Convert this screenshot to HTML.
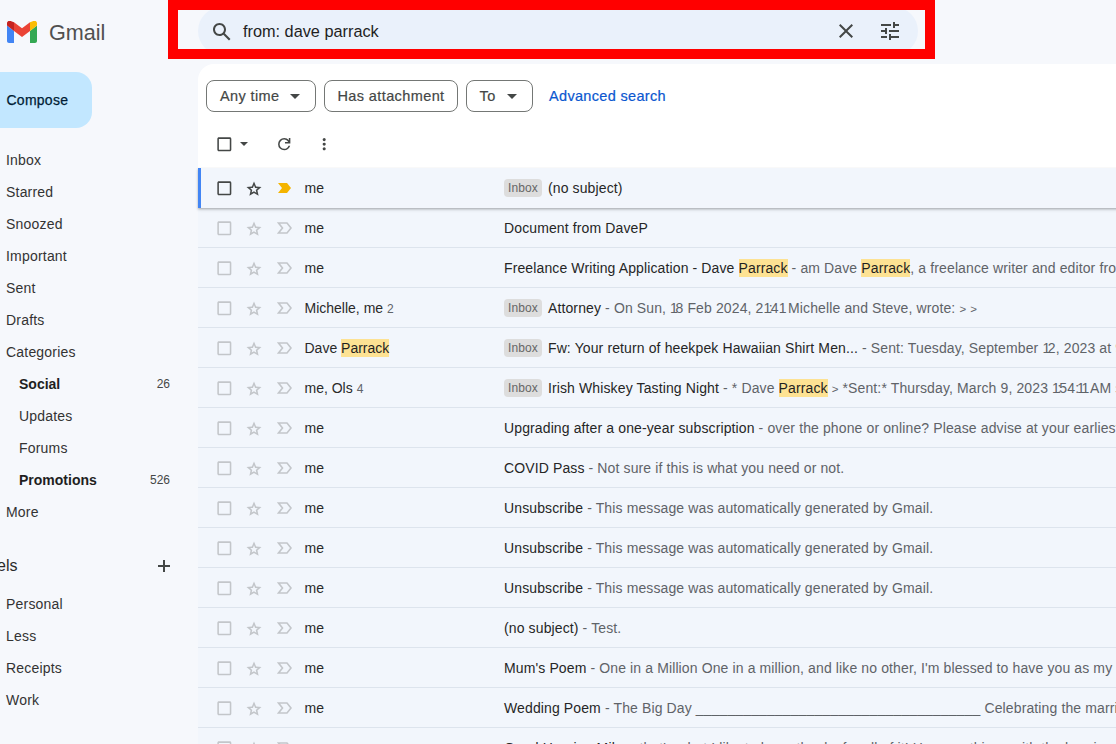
<!DOCTYPE html><html><head><meta charset="utf-8"><style>
html,body{margin:0;padding:0;width:1116px;height:744px;overflow:hidden;background:#f6f8fc;position:relative;font-family:"Liberation Sans",sans-serif}
.t{position:absolute;white-space:pre}
.row{position:absolute;left:198px;width:940px;height:40px;background:#f2f6fc;box-sizing:border-box;border-bottom:1px solid #dde4ed}
.hl{background:#fde293;display:inline-block;line-height:18px;color:#1f1f1f}
.sel{border-bottom:none;box-shadow:0 1px 2px 0 rgba(60,64,67,.3),0 2px 3px 0 rgba(60,64,67,.15)}
i{font-style:normal}
.o{letter-spacing:-2.4px}
.c{letter-spacing:-2px}
.gt{font-size:11.5px}
.cnt{font-size:12px;color:#5f6368}
.badge{display:inline-block;background:#dddddd;color:#666666;font-size:12px;line-height:18px;height:18px;padding:0 4px;border-radius:4px;margin-right:6px;vertical-align:1px}
</style></head><body>
<svg style="position:absolute;left:7px;top:21px" width="30" height="22" viewBox="0 0 30 22">
<path d="M2 22h5V9.9L0 4.6V20c0 1.1.9 2 2 2z" fill="#4285f4"/>
<path d="M23 22h5c1.1 0 2-.9 2-2V4.6L23 9.9z" fill="#34a853"/>
<path d="M23 1.3v8.6l7-5.3V2.3C30 .1 27.5-1.1 25.8.2z" fill="#fbbc04"/>
<path d="M7 9.9V1.3l8 6 8-6v8.6l-8 6z" fill="#ea4335"/>
<path d="M0 2.3v2.3l7 5.3V1.3L4.2.2C2.5-1.1 0 .1 0 2.3z" fill="#c5221f"/>
</svg>
<div class="t" style="left:49px;top:17.52px;font-size:21.6px;line-height:30px;font-weight:400;color:#505050;">Gmail</div>
<div style="position:absolute;left:-20px;top:72px;width:112px;height:56px;border-radius:16px;background:#c2e7ff"></div>
<div class="t" style="left:6.5px;top:90.15px;font-size:14px;line-height:20px;font-weight:400;color:#001d35;-webkit-text-stroke:0.25px #001d35;letter-spacing:0.25px;">Compose</div>
<div class="t" style="left:6px;top:150.15px;font-size:14px;line-height:20px;font-weight:400;color:#333333;letter-spacing:0.2px;">Inbox</div>
<div class="t" style="left:6px;top:182.15px;font-size:14px;line-height:20px;font-weight:400;color:#333333;letter-spacing:0.2px;">Starred</div>
<div class="t" style="left:6px;top:214.15px;font-size:14px;line-height:20px;font-weight:400;color:#333333;letter-spacing:0.2px;">Snoozed</div>
<div class="t" style="left:6px;top:246.15px;font-size:14px;line-height:20px;font-weight:400;color:#333333;letter-spacing:0.2px;">Important</div>
<div class="t" style="left:6px;top:278.15px;font-size:14px;line-height:20px;font-weight:400;color:#333333;letter-spacing:0.2px;">Sent</div>
<div class="t" style="left:6px;top:310.15px;font-size:14px;line-height:20px;font-weight:400;color:#333333;letter-spacing:0.2px;">Drafts</div>
<div class="t" style="left:6px;top:342.15px;font-size:14px;line-height:20px;font-weight:400;color:#333333;letter-spacing:0.2px;">Categories</div>
<div class="t" style="left:6px;top:502.15px;font-size:14px;line-height:20px;font-weight:400;color:#333333;letter-spacing:0.2px;">More</div>
<div class="t" style="left:6px;top:594.15px;font-size:14px;line-height:20px;font-weight:400;color:#333333;letter-spacing:0.2px;">Personal</div>
<div class="t" style="left:6px;top:626.15px;font-size:14px;line-height:20px;font-weight:400;color:#333333;letter-spacing:0.2px;">Less</div>
<div class="t" style="left:6px;top:658.15px;font-size:14px;line-height:20px;font-weight:400;color:#333333;letter-spacing:0.2px;">Receipts</div>
<div class="t" style="left:6px;top:690.15px;font-size:14px;line-height:20px;font-weight:400;color:#333333;letter-spacing:0.2px;">Work</div>
<div class="t" style="left:19px;top:374.15px;font-size:14px;line-height:20px;font-weight:700;color:#1f1f1f;">Social</div>
<div class="t" style="left:19px;top:406.15px;font-size:14px;line-height:20px;font-weight:400;color:#333333;letter-spacing:0.2px;">Updates</div>
<div class="t" style="left:19px;top:438.15px;font-size:14px;line-height:20px;font-weight:400;color:#333333;letter-spacing:0.2px;">Forums</div>
<div class="t" style="left:19px;top:470.15px;font-size:14px;line-height:20px;font-weight:700;color:#1f1f1f;">Promotions</div>
<div class="t" style="right:946px;top:376.34px;font-size:12px;line-height:17px;font-weight:400;color:#444746;">26</div>
<div class="t" style="right:946px;top:472.34px;font-size:12px;line-height:17px;font-weight:400;color:#444746;">526</div>
<div class="t" style="right:1098.5px;top:555.16px;font-size:16px;line-height:22px;font-weight:400;color:#2a2a2a;">Labels</div>
<div style="position:absolute;left:158px;top:565.25px;width:12px;height:1.5px;background:#444746"></div>
<div style="position:absolute;left:163.25px;top:560px;width:1.5px;height:12px;background:#444746"></div>
<div style="position:absolute;left:198px;top:7px;width:720px;height:48px;border-radius:24px;background:#eaf1fb"></div>
<svg style="position:absolute;left:210px;top:20px" width="24" height="24" viewBox="0 0 24 24"><path fill="#444746" d="M20.49 19l-5.73-5.73C15.53 12.2 16 10.91 16 9.5 16 5.91 13.09 3 9.5 3S3 5.910 3 9.5 5.91 16 9.5 16c1.41 0 2.7-.47 3.77-1.24L19 20.49 20.49 19zM5 9.5C5 7.01 7.01 5 9.5 5S14 7.01 14 9.5 11.99 14 9.5 14 5 11.99 5 9.5z"/></svg>
<div class="t" style="left:243px;top:20.05px;font-size:16.3px;line-height:23px;font-weight:400;color:#1f1f1f;">from: dave parrack</div>
<svg style="position:absolute;left:834px;top:19px" width="24" height="24" viewBox="0 0 24 24"><path fill="#444746" d="M19 6.41L17.59 5 12 10.59 6.41 5 5 6.41 10.59 12 5 17.59 6.41 19 12 13.41 17.59 19 19 17.59 13.41 12z"/></svg>
<svg style="position:absolute;left:878px;top:19px" width="24" height="24" viewBox="0 0 24 24"><path fill="#444746" d="M3 17v2h6v-2H3zM3 5v2h10V5H3zm10 16v-2h8v-2h-8v-2h-2v6h2zM7 9v2H3v2h4v2h2V9H7zm14 4v-2H11v2h10zm-6-4h2V7h4V5h-4V3h-2v6z"/></svg>
<div style="position:absolute;left:168px;top:0px;width:767px;height:59px;box-sizing:border-box;border:10px solid #ff0000"></div>
<div style="position:absolute;left:198px;top:64px;width:940px;height:700px;border-top-left-radius:16px;background:#fff"></div>
<div style="position:absolute;left:206px;top:80px;width:110px;height:32px;box-sizing:border-box;border:1px solid #747775;border-radius:8px"></div>
<div class="t" style="left:220px;top:85.58px;font-size:14.5px;line-height:20px;font-weight:400;color:#444746;letter-spacing:0.39px;-webkit-text-stroke:0.2px #444746;">Any time</div>
<svg style="position:absolute;left:290px;top:94px" width="10" height="5" viewBox="0 0 10 5"><path d="M0 0h10L5 5z" fill="#444746"/></svg>
<div style="position:absolute;left:324px;top:80px;width:134px;height:32px;box-sizing:border-box;border:1px solid #747775;border-radius:8px"></div>
<div class="t" style="left:337.5px;top:85.58px;font-size:14.5px;line-height:20px;font-weight:400;color:#444746;letter-spacing:0.39px;-webkit-text-stroke:0.2px #444746;">Has attachment</div>
<div style="position:absolute;left:466px;top:80px;width:67px;height:32px;box-sizing:border-box;border:1px solid #747775;border-radius:8px"></div>
<div class="t" style="left:479.5px;top:85.58px;font-size:14.5px;line-height:20px;font-weight:400;color:#444746;letter-spacing:0.39px;-webkit-text-stroke:0.2px #444746;">To</div>
<svg style="position:absolute;left:507px;top:94px" width="10" height="5" viewBox="0 0 10 5"><path d="M0 0h10L5 5z" fill="#444746"/></svg>
<div class="t" style="left:549px;top:85.58px;font-size:14.5px;line-height:20px;font-weight:400;color:#0b57d0;letter-spacing:0.33px;-webkit-text-stroke:0.2px #0b57d0;">Advanced search</div>
<svg style="position:absolute;left:214.67px;top:134.67px" width="18.67" height="18.67" viewBox="0 0 24 24"><path fill="#444746" d="M19 5v14H5V5h14m0-2H5c-1.1 0-2 .9-2 2v14c0 1.1.9 2 2 2h14c1.1 0 2-.9 2-2V5c0-1.1-.9-2-2-2z"/></svg>
<svg style="position:absolute;left:240px;top:142px" width="8" height="4" viewBox="0 0 8 4"><path d="M0 0h8L4 4z" fill="#444746"/></svg>
<svg style="position:absolute;left:275px;top:135px" width="18.45" height="18.45" viewBox="0 -960 960 960"><path fill="#444746" d="M480-160q-134 0-227-93t-93-227q0-134 93-227t227-93q69 0 132 28.5T720-690v-110h80v280H520v-80h168q-32-56-87.5-88T480-720q-100 0-170 70t-70 170q0 100 70 170t170 70q77 0 139-44t87-116h84q-28 106-114 173t-196 67Z"/></svg>
<svg style="position:absolute;left:314.5px;top:134.7px" width="18.4" height="18.4" viewBox="0 -960 960 960"><path fill="#444746" d="M480-160q-33 0-56.5-23.5T400-240q0-33 23.5-56.5T480-320q33 0 56.5 23.5T560-240q0 33-23.5 56.5T480-160Zm0-240q-33 0-56.5-23.5T400-480q0-33 23.5-56.5T480-560q33 0 56.5 23.5T560-480q0 33-23.5 56.5T480-400Zm0-240q-33 0-56.5-23.5T400-720q0-33 23.5-56.5T480-800q33 0 56.5 23.5T560-720q0 33-23.5 56.5T480-640Z"/></svg>
<div class="row" style="top:208px"></div>
<div class="row" style="top:248px"></div>
<div class="row" style="top:288px"></div>
<div class="row" style="top:328px"></div>
<div class="row" style="top:368px"></div>
<div class="row" style="top:408px"></div>
<div class="row" style="top:448px"></div>
<div class="row" style="top:488px"></div>
<div class="row" style="top:528px"></div>
<div class="row" style="top:568px"></div>
<div class="row" style="top:608px"></div>
<div class="row" style="top:648px"></div>
<div class="row" style="top:688px"></div>
<div class="row" style="top:728px"></div>
<div class="row sel" style="top:168px"></div>
<div style="position:absolute;left:198px;top:168px;width:3px;height:40px;background:#4285f4"></div>
<svg style="position:absolute;left:214.67px;top:178.67px" width="18.67" height="18.67" viewBox="0 0 24 24"><path fill="#444746" d="M19 5v14H5V5h14m0-2H5c-1.1 0-2 .9-2 2v14c0 1.1.9 2 2 2h14c1.1 0 2-.9 2-2V5c0-1.1-.9-2-2-2z"/></svg>
<svg style="position:absolute;left:245px;top:180px" width="18" height="18" viewBox="0 -960 960 960"><path fill="#444746" d="m354-287 126-76 126 77-33-144 111-96-146-13-58-136-58 135-146 13 111 97-33 143ZM233-120l65-281L80-590l288-25 112-265 112 265 288 25-218 189 65 281-247-149-247 149Z"/></svg>
<svg style="position:absolute;left:278px;top:183px" width="13" height="10" viewBox="0 0 13 10"><path d="M0 0h9l4 5-4 5H0l4-5z" fill="#f4b400"/></svg>
<div class="t" style="left:304.5px;top:177.85px;font-size:14px;line-height:20px;font-weight:400;color:#2a2a2a;">me</div>
<div class="t" style="left:504px;top:177.85px;font-size:14px;line-height:20px;font-weight:400;color:#262626;letter-spacing:0.12px;"><span class="badge">Inbox</span><span style="color:#262626">(no subject)</span></div>
<svg style="position:absolute;left:214.67px;top:218.67px" width="18.67" height="18.67" viewBox="0 0 24 24"><path fill="#c3c6ca" d="M19 5v14H5V5h14m0-2H5c-1.1 0-2 .9-2 2v14c0 1.1.9 2 2 2h14c1.1 0 2-.9 2-2V5c0-1.1-.9-2-2-2z"/></svg>
<svg style="position:absolute;left:245px;top:220px" width="18" height="18" viewBox="0 -960 960 960"><path fill="#c3c6ca" d="m354-287 126-76 126 77-33-144 111-96-146-13-58-136-58 135-146 13 111 97-33 143ZM233-120l65-281L80-590l288-25 112-265 112 265 288 25-218 189 65 281-247-149-247 149Z"/></svg>
<svg style="position:absolute;left:277px;top:222px" width="15" height="12" viewBox="0 0 15 12"><path d="M1.5 1h8.5l4 5-4 5H1.5l4-5z" fill="none" stroke="#c3c6ca" stroke-width="1.6" stroke-linejoin="miter"/></svg>
<div class="t" style="left:304.5px;top:217.85px;font-size:14px;line-height:20px;font-weight:400;color:#2a2a2a;">me</div>
<div class="t" style="left:504px;top:217.85px;font-size:14px;line-height:20px;font-weight:400;color:#262626;letter-spacing:0.12px;"><span style="color:#262626">Document from DaveP</span></div>
<svg style="position:absolute;left:214.67px;top:258.67px" width="18.67" height="18.67" viewBox="0 0 24 24"><path fill="#c3c6ca" d="M19 5v14H5V5h14m0-2H5c-1.1 0-2 .9-2 2v14c0 1.1.9 2 2 2h14c1.1 0 2-.9 2-2V5c0-1.1-.9-2-2-2z"/></svg>
<svg style="position:absolute;left:245px;top:260px" width="18" height="18" viewBox="0 -960 960 960"><path fill="#c3c6ca" d="m354-287 126-76 126 77-33-144 111-96-146-13-58-136-58 135-146 13 111 97-33 143ZM233-120l65-281L80-590l288-25 112-265 112 265 288 25-218 189 65 281-247-149-247 149Z"/></svg>
<svg style="position:absolute;left:277px;top:262px" width="15" height="12" viewBox="0 0 15 12"><path d="M1.5 1h8.5l4 5-4 5H1.5l4-5z" fill="none" stroke="#c3c6ca" stroke-width="1.6" stroke-linejoin="miter"/></svg>
<div class="t" style="left:304.5px;top:257.85px;font-size:14px;line-height:20px;font-weight:400;color:#2a2a2a;">me</div>
<div class="t" style="left:504px;top:257.85px;font-size:14px;line-height:20px;font-weight:400;color:#262626;letter-spacing:0.12px;"><span style="color:#262626">Freelance Writing Application - Dave <span class="hl">Parrack</span></span><span style="color:#5f6368"> - am Dave <span class="hl">Parrack</span>, a freelance writer and editor from the UK</span></div>
<svg style="position:absolute;left:214.67px;top:298.67px" width="18.67" height="18.67" viewBox="0 0 24 24"><path fill="#c3c6ca" d="M19 5v14H5V5h14m0-2H5c-1.1 0-2 .9-2 2v14c0 1.1.9 2 2 2h14c1.1 0 2-.9 2-2V5c0-1.1-.9-2-2-2z"/></svg>
<svg style="position:absolute;left:245px;top:300px" width="18" height="18" viewBox="0 -960 960 960"><path fill="#c3c6ca" d="m354-287 126-76 126 77-33-144 111-96-146-13-58-136-58 135-146 13 111 97-33 143ZM233-120l65-281L80-590l288-25 112-265 112 265 288 25-218 189 65 281-247-149-247 149Z"/></svg>
<svg style="position:absolute;left:277px;top:302px" width="15" height="12" viewBox="0 0 15 12"><path d="M1.5 1h8.5l4 5-4 5H1.5l4-5z" fill="none" stroke="#c3c6ca" stroke-width="1.6" stroke-linejoin="miter"/></svg>
<div class="t" style="left:304.5px;top:297.85px;font-size:14px;line-height:20px;font-weight:400;color:#2a2a2a;">Michelle, me <span class="cnt">2</span></div>
<div class="t" style="left:504px;top:297.85px;font-size:14px;line-height:20px;font-weight:400;color:#262626;letter-spacing:0.12px;"><span class="badge">Inbox</span><span style="color:#262626">Attorney</span><span style="color:#5f6368"> - On Sun, <i class=o>1</i>8 Feb 2024, 2<i class=o>1</i><i class=c>:</i>4<i class=o>1</i> Michelle and Steve, wrote: <span class=gt>&gt;</span> <span class=gt>&gt;</span></span></div>
<svg style="position:absolute;left:214.67px;top:338.67px" width="18.67" height="18.67" viewBox="0 0 24 24"><path fill="#c3c6ca" d="M19 5v14H5V5h14m0-2H5c-1.1 0-2 .9-2 2v14c0 1.1.9 2 2 2h14c1.1 0 2-.9 2-2V5c0-1.1-.9-2-2-2z"/></svg>
<svg style="position:absolute;left:245px;top:340px" width="18" height="18" viewBox="0 -960 960 960"><path fill="#c3c6ca" d="m354-287 126-76 126 77-33-144 111-96-146-13-58-136-58 135-146 13 111 97-33 143ZM233-120l65-281L80-590l288-25 112-265 112 265 288 25-218 189 65 281-247-149-247 149Z"/></svg>
<svg style="position:absolute;left:277px;top:342px" width="15" height="12" viewBox="0 0 15 12"><path d="M1.5 1h8.5l4 5-4 5H1.5l4-5z" fill="none" stroke="#c3c6ca" stroke-width="1.6" stroke-linejoin="miter"/></svg>
<div class="t" style="left:304.5px;top:337.85px;font-size:14px;line-height:20px;font-weight:400;color:#2a2a2a;">Dave <span class="hl">Parrack</span></div>
<div class="t" style="left:504px;top:337.85px;font-size:14px;line-height:20px;font-weight:400;color:#262626;letter-spacing:0.12px;"><span class="badge">Inbox</span><span style="color:#262626">Fw: Your return of heekpek Hawaiian Shirt Men...</span><span style="color:#5f6368"> - Sent: Tuesday, September <i class=o>1</i>2, 2023 at 9<i class=c>:</i>30 AM</span></div>
<svg style="position:absolute;left:214.67px;top:378.67px" width="18.67" height="18.67" viewBox="0 0 24 24"><path fill="#c3c6ca" d="M19 5v14H5V5h14m0-2H5c-1.1 0-2 .9-2 2v14c0 1.1.9 2 2 2h14c1.1 0 2-.9 2-2V5c0-1.1-.9-2-2-2z"/></svg>
<svg style="position:absolute;left:245px;top:380px" width="18" height="18" viewBox="0 -960 960 960"><path fill="#c3c6ca" d="m354-287 126-76 126 77-33-144 111-96-146-13-58-136-58 135-146 13 111 97-33 143ZM233-120l65-281L80-590l288-25 112-265 112 265 288 25-218 189 65 281-247-149-247 149Z"/></svg>
<svg style="position:absolute;left:277px;top:382px" width="15" height="12" viewBox="0 0 15 12"><path d="M1.5 1h8.5l4 5-4 5H1.5l4-5z" fill="none" stroke="#c3c6ca" stroke-width="1.6" stroke-linejoin="miter"/></svg>
<div class="t" style="left:304.5px;top:377.85px;font-size:14px;line-height:20px;font-weight:400;color:#2a2a2a;">me, Ols <span class="cnt">4</span></div>
<div class="t" style="left:504px;top:377.85px;font-size:14px;line-height:20px;font-weight:400;color:#262626;letter-spacing:0.12px;"><span class="badge">Inbox</span><span style="color:#262626">Irish Whiskey Tasting Night</span><span style="color:#5f6368"> - * Dave <span class="hl">Parrack</span> <span class=gt>&gt;</span> *Sent:* Thursday, March 9, 2023 <i class=o>1</i><i class=c>:</i>54<i class=c>:</i><i class=o>1</i><i class=o>1</i> AM <span class=gt>&gt;</span></span></div>
<svg style="position:absolute;left:214.67px;top:418.67px" width="18.67" height="18.67" viewBox="0 0 24 24"><path fill="#c3c6ca" d="M19 5v14H5V5h14m0-2H5c-1.1 0-2 .9-2 2v14c0 1.1.9 2 2 2h14c1.1 0 2-.9 2-2V5c0-1.1-.9-2-2-2z"/></svg>
<svg style="position:absolute;left:245px;top:420px" width="18" height="18" viewBox="0 -960 960 960"><path fill="#c3c6ca" d="m354-287 126-76 126 77-33-144 111-96-146-13-58-136-58 135-146 13 111 97-33 143ZM233-120l65-281L80-590l288-25 112-265 112 265 288 25-218 189 65 281-247-149-247 149Z"/></svg>
<svg style="position:absolute;left:277px;top:422px" width="15" height="12" viewBox="0 0 15 12"><path d="M1.5 1h8.5l4 5-4 5H1.5l4-5z" fill="none" stroke="#c3c6ca" stroke-width="1.6" stroke-linejoin="miter"/></svg>
<div class="t" style="left:304.5px;top:417.85px;font-size:14px;line-height:20px;font-weight:400;color:#2a2a2a;">me</div>
<div class="t" style="left:504px;top:417.85px;font-size:14px;line-height:20px;font-weight:400;color:#262626;letter-spacing:0.12px;"><span style="color:#262626">Upgrading after a one-year subscription</span><span style="color:#5f6368"> - over the phone or online? Please advise at your earliest convenience</span></div>
<svg style="position:absolute;left:214.67px;top:458.67px" width="18.67" height="18.67" viewBox="0 0 24 24"><path fill="#c3c6ca" d="M19 5v14H5V5h14m0-2H5c-1.1 0-2 .9-2 2v14c0 1.1.9 2 2 2h14c1.1 0 2-.9 2-2V5c0-1.1-.9-2-2-2z"/></svg>
<svg style="position:absolute;left:245px;top:460px" width="18" height="18" viewBox="0 -960 960 960"><path fill="#c3c6ca" d="m354-287 126-76 126 77-33-144 111-96-146-13-58-136-58 135-146 13 111 97-33 143ZM233-120l65-281L80-590l288-25 112-265 112 265 288 25-218 189 65 281-247-149-247 149Z"/></svg>
<svg style="position:absolute;left:277px;top:462px" width="15" height="12" viewBox="0 0 15 12"><path d="M1.5 1h8.5l4 5-4 5H1.5l4-5z" fill="none" stroke="#c3c6ca" stroke-width="1.6" stroke-linejoin="miter"/></svg>
<div class="t" style="left:304.5px;top:457.85px;font-size:14px;line-height:20px;font-weight:400;color:#2a2a2a;">me</div>
<div class="t" style="left:504px;top:457.85px;font-size:14px;line-height:20px;font-weight:400;color:#262626;letter-spacing:0.12px;"><span style="color:#262626">COVID Pass</span><span style="color:#5f6368"> - Not sure if this is what you need or not.</span></div>
<svg style="position:absolute;left:214.67px;top:498.67px" width="18.67" height="18.67" viewBox="0 0 24 24"><path fill="#c3c6ca" d="M19 5v14H5V5h14m0-2H5c-1.1 0-2 .9-2 2v14c0 1.1.9 2 2 2h14c1.1 0 2-.9 2-2V5c0-1.1-.9-2-2-2z"/></svg>
<svg style="position:absolute;left:245px;top:500px" width="18" height="18" viewBox="0 -960 960 960"><path fill="#c3c6ca" d="m354-287 126-76 126 77-33-144 111-96-146-13-58-136-58 135-146 13 111 97-33 143ZM233-120l65-281L80-590l288-25 112-265 112 265 288 25-218 189 65 281-247-149-247 149Z"/></svg>
<svg style="position:absolute;left:277px;top:502px" width="15" height="12" viewBox="0 0 15 12"><path d="M1.5 1h8.5l4 5-4 5H1.5l4-5z" fill="none" stroke="#c3c6ca" stroke-width="1.6" stroke-linejoin="miter"/></svg>
<div class="t" style="left:304.5px;top:497.85px;font-size:14px;line-height:20px;font-weight:400;color:#2a2a2a;">me</div>
<div class="t" style="left:504px;top:497.85px;font-size:14px;line-height:20px;font-weight:400;color:#262626;letter-spacing:0.12px;"><span style="color:#262626">Unsubscribe</span><span style="color:#5f6368"> - This message was automatically generated by Gmail.</span></div>
<svg style="position:absolute;left:214.67px;top:538.67px" width="18.67" height="18.67" viewBox="0 0 24 24"><path fill="#c3c6ca" d="M19 5v14H5V5h14m0-2H5c-1.1 0-2 .9-2 2v14c0 1.1.9 2 2 2h14c1.1 0 2-.9 2-2V5c0-1.1-.9-2-2-2z"/></svg>
<svg style="position:absolute;left:245px;top:540px" width="18" height="18" viewBox="0 -960 960 960"><path fill="#c3c6ca" d="m354-287 126-76 126 77-33-144 111-96-146-13-58-136-58 135-146 13 111 97-33 143ZM233-120l65-281L80-590l288-25 112-265 112 265 288 25-218 189 65 281-247-149-247 149Z"/></svg>
<svg style="position:absolute;left:277px;top:542px" width="15" height="12" viewBox="0 0 15 12"><path d="M1.5 1h8.5l4 5-4 5H1.5l4-5z" fill="none" stroke="#c3c6ca" stroke-width="1.6" stroke-linejoin="miter"/></svg>
<div class="t" style="left:304.5px;top:537.85px;font-size:14px;line-height:20px;font-weight:400;color:#2a2a2a;">me</div>
<div class="t" style="left:504px;top:537.85px;font-size:14px;line-height:20px;font-weight:400;color:#262626;letter-spacing:0.12px;"><span style="color:#262626">Unsubscribe</span><span style="color:#5f6368"> - This message was automatically generated by Gmail.</span></div>
<svg style="position:absolute;left:214.67px;top:578.67px" width="18.67" height="18.67" viewBox="0 0 24 24"><path fill="#c3c6ca" d="M19 5v14H5V5h14m0-2H5c-1.1 0-2 .9-2 2v14c0 1.1.9 2 2 2h14c1.1 0 2-.9 2-2V5c0-1.1-.9-2-2-2z"/></svg>
<svg style="position:absolute;left:245px;top:580px" width="18" height="18" viewBox="0 -960 960 960"><path fill="#c3c6ca" d="m354-287 126-76 126 77-33-144 111-96-146-13-58-136-58 135-146 13 111 97-33 143ZM233-120l65-281L80-590l288-25 112-265 112 265 288 25-218 189 65 281-247-149-247 149Z"/></svg>
<svg style="position:absolute;left:277px;top:582px" width="15" height="12" viewBox="0 0 15 12"><path d="M1.5 1h8.5l4 5-4 5H1.5l4-5z" fill="none" stroke="#c3c6ca" stroke-width="1.6" stroke-linejoin="miter"/></svg>
<div class="t" style="left:304.5px;top:577.85px;font-size:14px;line-height:20px;font-weight:400;color:#2a2a2a;">me</div>
<div class="t" style="left:504px;top:577.85px;font-size:14px;line-height:20px;font-weight:400;color:#262626;letter-spacing:0.12px;"><span style="color:#262626">Unsubscribe</span><span style="color:#5f6368"> - This message was automatically generated by Gmail.</span></div>
<svg style="position:absolute;left:214.67px;top:618.67px" width="18.67" height="18.67" viewBox="0 0 24 24"><path fill="#c3c6ca" d="M19 5v14H5V5h14m0-2H5c-1.1 0-2 .9-2 2v14c0 1.1.9 2 2 2h14c1.1 0 2-.9 2-2V5c0-1.1-.9-2-2-2z"/></svg>
<svg style="position:absolute;left:245px;top:620px" width="18" height="18" viewBox="0 -960 960 960"><path fill="#c3c6ca" d="m354-287 126-76 126 77-33-144 111-96-146-13-58-136-58 135-146 13 111 97-33 143ZM233-120l65-281L80-590l288-25 112-265 112 265 288 25-218 189 65 281-247-149-247 149Z"/></svg>
<svg style="position:absolute;left:277px;top:622px" width="15" height="12" viewBox="0 0 15 12"><path d="M1.5 1h8.5l4 5-4 5H1.5l4-5z" fill="none" stroke="#c3c6ca" stroke-width="1.6" stroke-linejoin="miter"/></svg>
<div class="t" style="left:304.5px;top:617.85px;font-size:14px;line-height:20px;font-weight:400;color:#2a2a2a;">me</div>
<div class="t" style="left:504px;top:617.85px;font-size:14px;line-height:20px;font-weight:400;color:#262626;letter-spacing:0.12px;"><span style="color:#262626">(no subject)</span><span style="color:#5f6368"> - Test.</span></div>
<svg style="position:absolute;left:214.67px;top:658.67px" width="18.67" height="18.67" viewBox="0 0 24 24"><path fill="#c3c6ca" d="M19 5v14H5V5h14m0-2H5c-1.1 0-2 .9-2 2v14c0 1.1.9 2 2 2h14c1.1 0 2-.9 2-2V5c0-1.1-.9-2-2-2z"/></svg>
<svg style="position:absolute;left:245px;top:660px" width="18" height="18" viewBox="0 -960 960 960"><path fill="#c3c6ca" d="m354-287 126-76 126 77-33-144 111-96-146-13-58-136-58 135-146 13 111 97-33 143ZM233-120l65-281L80-590l288-25 112-265 112 265 288 25-218 189 65 281-247-149-247 149Z"/></svg>
<svg style="position:absolute;left:277px;top:662px" width="15" height="12" viewBox="0 0 15 12"><path d="M1.5 1h8.5l4 5-4 5H1.5l4-5z" fill="none" stroke="#c3c6ca" stroke-width="1.6" stroke-linejoin="miter"/></svg>
<div class="t" style="left:304.5px;top:657.85px;font-size:14px;line-height:20px;font-weight:400;color:#2a2a2a;">me</div>
<div class="t" style="left:504px;top:657.85px;font-size:14px;line-height:20px;font-weight:400;color:#262626;letter-spacing:0.12px;"><span style="color:#262626">Mum&#39;s Poem</span><span style="color:#5f6368"> - One in a Million One in a million, and like no other, I&#39;m blessed to have you as my mum</span></div>
<svg style="position:absolute;left:214.67px;top:698.67px" width="18.67" height="18.67" viewBox="0 0 24 24"><path fill="#c3c6ca" d="M19 5v14H5V5h14m0-2H5c-1.1 0-2 .9-2 2v14c0 1.1.9 2 2 2h14c1.1 0 2-.9 2-2V5c0-1.1-.9-2-2-2z"/></svg>
<svg style="position:absolute;left:245px;top:700px" width="18" height="18" viewBox="0 -960 960 960"><path fill="#c3c6ca" d="m354-287 126-76 126 77-33-144 111-96-146-13-58-136-58 135-146 13 111 97-33 143ZM233-120l65-281L80-590l288-25 112-265 112 265 288 25-218 189 65 281-247-149-247 149Z"/></svg>
<svg style="position:absolute;left:277px;top:702px" width="15" height="12" viewBox="0 0 15 12"><path d="M1.5 1h8.5l4 5-4 5H1.5l4-5z" fill="none" stroke="#c3c6ca" stroke-width="1.6" stroke-linejoin="miter"/></svg>
<div class="t" style="left:304.5px;top:697.85px;font-size:14px;line-height:20px;font-weight:400;color:#2a2a2a;">me</div>
<div class="t" style="left:504px;top:697.85px;font-size:14px;line-height:20px;font-weight:400;color:#262626;letter-spacing:0.12px;"><span style="color:#262626">Wedding Poem</span><span style="color:#5f6368"> - The Big Day ____________________________________ Celebrating the marriage of</span></div>
<svg style="position:absolute;left:214.67px;top:738.67px" width="18.67" height="18.67" viewBox="0 0 24 24"><path fill="#c3c6ca" d="M19 5v14H5V5h14m0-2H5c-1.1 0-2 .9-2 2v14c0 1.1.9 2 2 2h14c1.1 0 2-.9 2-2V5c0-1.1-.9-2-2-2z"/></svg>
<svg style="position:absolute;left:245px;top:740px" width="18" height="18" viewBox="0 -960 960 960"><path fill="#c3c6ca" d="m354-287 126-76 126 77-33-144 111-96-146-13-58-136-58 135-146 13 111 97-33 143ZM233-120l65-281L80-590l288-25 112-265 112 265 288 25-218 189 65 281-247-149-247 149Z"/></svg>
<svg style="position:absolute;left:277px;top:742px" width="15" height="12" viewBox="0 0 15 12"><path d="M1.5 1h8.5l4 5-4 5H1.5l4-5z" fill="none" stroke="#c3c6ca" stroke-width="1.6" stroke-linejoin="miter"/></svg>
<div class="t" style="left:304.5px;top:737.85px;font-size:14px;line-height:20px;font-weight:400;color:#2a2a2a;">me</div>
<div class="t" style="left:504px;top:737.85px;font-size:14px;line-height:20px;font-weight:400;color:#262626;letter-spacing:0.12px;"><span style="color:#262626">Good Hearing Mike</span><span style="color:#5f6368"> - that&#39;s what I like to hear, thanks for all of it! How are things with the hearing aid this time</span></div>
</body></html>
